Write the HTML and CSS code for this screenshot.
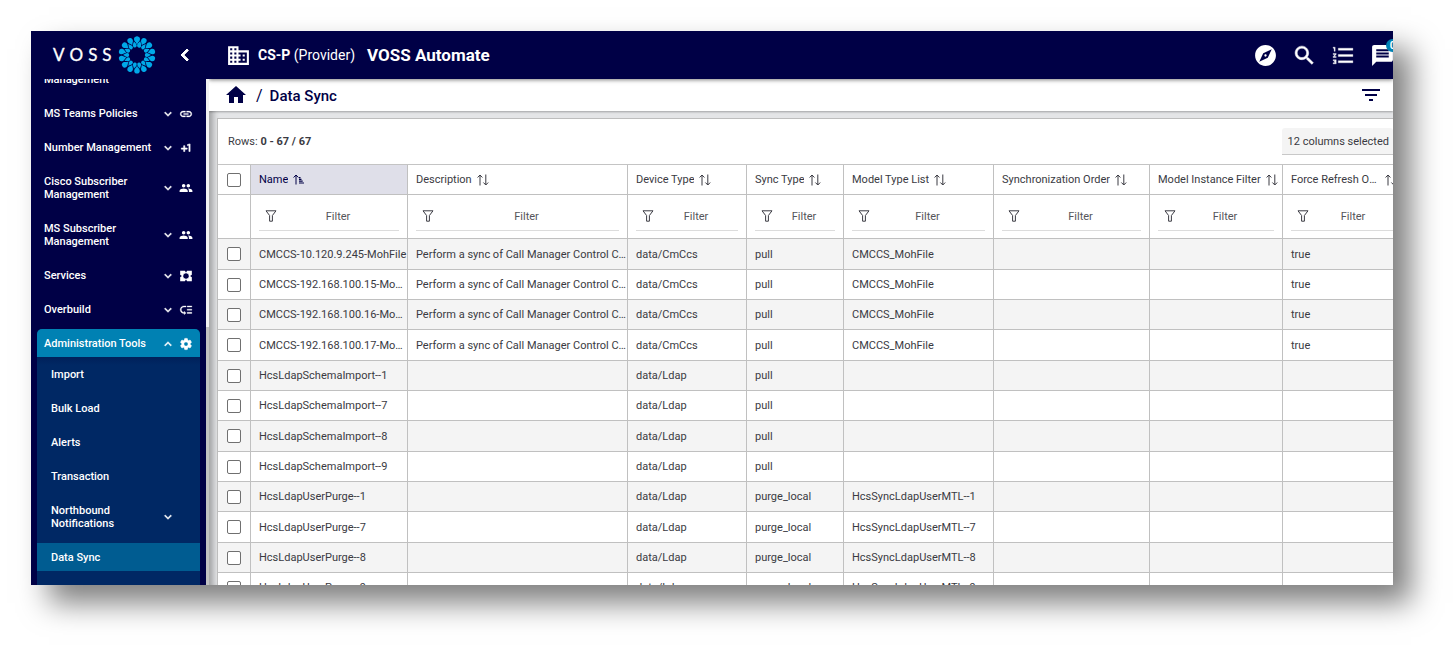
FILE: index.html
```html
<!DOCTYPE html>
<html lang="en">
<head>
<meta charset="utf-8">
<title>VOSS Automate - Data Sync</title>
<link rel="stylesheet" href="styles.css">
</head>
<body>
<svg class="sprite" aria-hidden="true">
  <symbol id="more" viewBox="0 0 24 24"><path stroke="currentColor" d="M16.6 8.6 12 13.2 7.400 8.600 6 10l6 6 6-6z"/></symbol>
  <symbol id="less" viewBox="0 0 24 24"><path stroke="currentColor" d="m12 8-6 6 1.400 1.400L12 10.800l4.600 4.600L18 14z"/></symbol>
  <symbol id="back" viewBox="0 0 24 24"><path stroke="currentColor" d="M15.4 7.4 14 6l-6 6 6 6 1.400-1.400L10.800 12z"/></symbol>
  <symbol id="link" viewBox="0 0 24 24"><path stroke="currentColor" stroke-width=".5" d="M3.900 12c0-1.710 1.390-3.100 3.100-3.100h4V7H7c-2.760 0-5 2.240-5 5s2.240 5 5 5h4v-1.900H7c-1.710 0-3.100-1.390-3.100-3.100zM8 13h8v-2H8v2zm9-6h-4v1.900h4c1.710 0 3.100 1.390 3.100 3.100s-1.390 3.100-3.100 3.100h-4V17h4c2.760 0 5-2.240 5-5s-2.240-5-5-5z"/></symbol>
  <symbol id="plus" viewBox="0 0 24 24"><path stroke="currentColor" d="M10 8H8v4H4v2h4v4h2v-4h4v-2h-4zm4.500-1.920V7.900l2.500-.5V18h2V5z"/></symbol>
  <symbol id="people" viewBox="0 0 24 24"><path d="M16 11c1.660 0 2.990-1.340 2.990-3S17.660 5 16 5c-1.660 0-3 1.340-3 3s1.340 3 3 3zm-8 0c1.660 0 2.990-1.340 2.990-3S9.660 5 8 5C6.340 5 5 6.340 5 8s1.340 3 3 3zm0 2c-2.330 0-7 1.170-7 3.500V19h14v-2.500c0-2.330-4.670-3.500-7-3.500zm8 0c-.29 0-.62.02-.97.05 1.160.84 1.970 1.970 1.970 3.450V19h6v-2.500c0-2.330-4.670-3.500-7-3.500z"/></symbol>
  <symbol id="services" viewBox="0 0 24 24"><path fill-rule="evenodd" d="M2 3h8l2 3 2-3h8v7l-3 2 3 2v7h-8l-2-3-2 3H2v-7l3-2-3-2zM8 8v2.500L6.500 12 8 13.500V16h2.500l1.500 1.500 1.500-1.500H16v-2.500l1.500-1.500-1.500-1.500V8h-2.500L12 6.500 10.500 8z"/></symbol>
  <symbol id="overbuild" viewBox="0 0 24 24"><path stroke="currentColor" stroke-width=".5" d="M14 5h8v2h-8zm0 5.500h8v2h-8zm0 5.500h8v2h-8zM2 11.500C2 15.080 4.920 18 8.500 18H9v2l3-3-3-3v2h-.5C6.020 16 4 13.980 4 11.500S6.020 7 8.500 7H12V5H8.500C4.920 5 2 7.920 2 11.500z"/></symbol>
  <symbol id="gear" viewBox="0 0 24 24"><path stroke="currentColor" d="M19.140 12.940c.04-.3.06-.61.06-.94 0-.32-.02-.64-.07-.94l2.030-1.580c.18-.14.23-.41.12-.61l-1.920-3.320c-.12-.22-.37-.29-.59-.22l-2.390.96c-.5-.38-1.030-.7-1.620-.94l-.36-2.540c-.04-.24-.24-.41-.48-.41h-3.840c-.24 0-.43.17-.47.41l-.36 2.540c-.59.24-1.130.57-1.620.94l-2.390-.96c-.22-.08-.47 0-.59.22L2.740 8.870c-.12.21-.08.47.12.61l2.030 1.580c-.05.3-.09.63-.09.94s.02.64.07.94l-2.030 1.580c-.18.14-.23.41-.12.61l1.920 3.320c.12.22.37.29.59.22l2.390-.96c.5.38 1.030.7 1.620.94l.36 2.540c.05.24.24.41.48.41h3.840c.24 0 .44-.17.47-.41l.36-2.540c.59-.24 1.130-.56 1.620-.94l2.390.96c.22.08.47 0 .59-.22l1.920-3.320c.12-.22.07-.47-.12-.61l-2.010-1.580zM12 15.600c-1.980 0-3.600-1.620-3.600-3.600s1.620-3.600 3.600-3.600 3.600 1.620 3.600 3.600-1.620 3.600-3.600 3.600z"/></symbol>
  <symbol id="building" viewBox="0 0 24 24"><path d="M12 7V3H2v18h20V7H12zM6 19H4v-2h2v2zm0-4H4v-2h2v2zm0-4H4V9h2v2zm0-4H4V5h2v2zm4 12H8v-2h2v2zm0-4H8v-2h2v2zm0-4H8V9h2v2zm0-4H8V5h2v2zm10 12h-8v-2h2v-2h-2v-2h2v-2h-2V9h8v10zm-2-8h-2v2h2v-2zm0 4h-2v2h2v-2z"/></symbol>
  <symbol id="compass" viewBox="0 0 24 24"><path d="M12 10.900c-.61 0-1.100.49-1.100 1.100s.49 1.100 1.100 1.100c.61 0 1.100-.49 1.100-1.100s-.49-1.100-1.100-1.100zM12 2C6.480 2 2 6.480 2 12s4.480 10 10 10 10-4.480 10-10S17.520 2 12 2zm2.190 12.190L6 18l3.810-8.190L18 6l-3.810 8.190z"/></symbol>
  <symbol id="search" viewBox="0 0 24 24"><path stroke="currentColor" stroke-width=".5" d="M15.500 14h-.79l-.28-.27C15.410 12.590 16 11.110 16 9.500 16 5.910 13.090 3 9.500 3S3 5.910 3 9.500 5.910 16 9.500 16c1.610 0 3.090-.59 4.230-1.570l.27.28v.79l5 4.990L20.490 19l-4.990-5zm-6 0C7.010 14 5 11.990 5 9.500S7.010 5 9.500 5 14 7.010 14 9.500 11.990 14 9.500 14z"/></symbol>
  <symbol id="list" viewBox="0 0 24 24"><path stroke="currentColor" stroke-width=".3" d="M2 17h2v.5H3v1h1v.5H2v1h3v-4H2v1zm1-9h1V4H2v1h1v3zm-1 3h1.800L2 13.100v.9h3v-1H3.200L5 10.900V10H2v1zm5-6v2h14V5H7zm0 14h14v-2H7v2zm0-6h14v-2H7v2z"/></symbol>
  <symbol id="message" viewBox="0 0 24 24"><path d="M20 2H4c-1.100 0-1.990.9-1.990 2L2 22l4-4h14c1.100 0 2-.9 2-2V4c0-1.100-.9-2-2-2zm-2 12H6v-2h12v2zm0-3H6V9h12v2zm0-3H6V6h12v2z"/></symbol>
  <symbol id="home" viewBox="0 0 24 24"><path d="M10 20v-6h4v6h5v-8h3L12 3 2 12h3v8z"/></symbol>
  <symbol id="filters" viewBox="0 0 24 24"><path d="M10 18h4v-2h-4v2zM3 6v2h18V6H3zm3 7h12v-2H6v2z"/></symbol>
  <symbol id="funnel" viewBox="0 0 12 12"><path d="M1 .8h10L7.400 5.500v5.700H4.600V5.500z" fill="none" stroke="currentColor"/></symbol>
  <symbol id="sort" viewBox="0 0 12 12"><path d="M3 11.500V1.200M.6 3.500 3 1l2.400 2.500M8.800.5v10.300M6.400 8.500l2.400 2.500 2.400-2.500" fill="none" stroke="currentColor"/></symbol>
  <symbol id="sorted" viewBox="0 0 12 12"><path d="M3 10.500V1.200M.6 3.500 3 1l2.400 2.500" fill="none" stroke="currentColor"/><path d="M6 3h1.500v1.200H6zM6 4.800h2.500V6H6zM6 6.600h3.700v1.200H6zM6 8.400h5v1.200H6z"/></symbol>
  <symbol id="petals" viewBox="-19 -19 38 38"><path id="petal" d="M0-10.800C-.9-13-2.800-13.800-2.800-15.700a2.800 2.800 0 0 1 5.600 0C2.800-13.800.9-13 0-10.800z"/><path id="seed" transform="rotate(12.860)" d="M0-14C.6-12.200 1.900-11.500 1.900-9.700a1.900 1.900 0 0 1-3.800 0C-1.900-11.500-.6-12.200 0-14z"/>
    <g id="pair"><use href="#petal"/><use href="#seed"/></g>
    <use href="#pair" transform="rotate(25.710)"/><use href="#pair" transform="rotate(51.430)"/><use href="#pair" transform="rotate(77.140)"/><use href="#pair" transform="rotate(102.860)"/><use href="#pair" transform="rotate(128.570)"/><use href="#pair" transform="rotate(154.290)"/><use href="#pair" transform="rotate(180)"/><use href="#pair" transform="rotate(205.710)"/><use href="#pair" transform="rotate(231.430)"/><use href="#pair" transform="rotate(257.140)"/><use href="#pair" transform="rotate(282.860)"/><use href="#pair" transform="rotate(308.570)"/><use href="#pair" transform="rotate(334.290)"/>
  </symbol>
</svg>
<div class="app">
  <aside class="sidebar">
    <div class="brand">
      <a class="logo" href="#" aria-label="VOSS home">
        <span class="logo-word"><span>V</span><span>O</span><span>S</span><span>S</span></span>
        <svg class="logo-mark"><use href="#petals"/></svg>
      </a>
      <button class="collapse" aria-label="Collapse menu"><svg><use href="#back"/></svg></button>
    </div>
    <div class="menu-scroll">
      <nav class="menu">
        <a class="item" href="#"><span class="label">Management</span></a>
        <a class="item" href="#"><span class="label">MS Teams Policies</span><svg><use href="#more"/></svg><svg><use href="#link"/></svg></a>
        <a class="item" href="#"><span class="label">Number Management</span><svg><use href="#more"/></svg><svg><use href="#plus"/></svg></a>
        <a class="item" href="#"><span class="label">Cisco Subscriber<br>Management</span><svg><use href="#more"/></svg><svg><use href="#people"/></svg></a>
        <a class="item" href="#"><span class="label">MS Subscriber<br>Management</span><svg><use href="#more"/></svg><svg><use href="#people"/></svg></a>
        <a class="item" href="#"><span class="label">Services</span><svg><use href="#more"/></svg><svg><use href="#services"/></svg></a>
        <a class="item" href="#"><span class="label">Overbuild</span><svg><use href="#more"/></svg><svg><use href="#overbuild"/></svg></a>
        <div class="group">
          <a class="item open" href="#"><span class="label">Administration Tools</span><svg><use href="#less"/></svg><svg><use href="#gear"/></svg></a>
          <div class="submenu">
            <a class="item" href="#"><span class="label">Import</span></a>
            <a class="item" href="#"><span class="label">Bulk Load</span></a>
            <a class="item" href="#"><span class="label">Alerts</span></a>
            <a class="item" href="#"><span class="label">Transaction</span></a>
            <a class="item" href="#"><span class="label">Northbound<br>Notifications</span><svg><use href="#more"/></svg><span class="spacer"></span></a>
            <a class="item current" href="#"><span class="label">Data Sync</span></a>
          </div>
        </div>
      </nav>
      <div class="track"><div class="thumb"></div></div>
    </div>
  </aside>
  <main class="main">
    <header class="topbar">
      <svg class="building"><use href="#building"/></svg>
      <p class="scope"><b>CS-P</b> (Provider)</p>
      <h1>VOSS Automate</h1>
      <div class="tools">
        <button aria-label="Explore"><svg><use href="#compass"/></svg></button>
        <button aria-label="Search"><svg><use href="#search"/></svg></button>
        <button aria-label="Transactions"><svg><use href="#list"/></svg></button>
        <button aria-label="Messages"><svg><use href="#message"/></svg><span class="badge">0</span></button>
      </div>
    </header>
    <div class="crumbs">
      <a href="#" aria-label="Home"><svg><use href="#home"/></svg></a>
      <span class="slash">/</span>
      <h2>Data Sync</h2>
      <button class="filter-button" aria-label="Filters"><svg><use href="#filters"/></svg></button>
    </div>
    <section class="card">
      <div class="card-head">
        <p>Rows: <b>0 - 67 / 67</b></p>
        <button class="columns">12 columns selected</button>
      </div>
      <table class="grid">
        <colgroup><col class="c-check"><col class="c-name"><col class="c-desc"><col class="c-device"><col class="c-sync"><col class="c-model"><col class="c-order"><col class="c-instance"><col class="c-force"></colgroup>
        <thead>
          <tr class="titles">
            <th><input type="checkbox" aria-label="Select all"></th>
            <th class="sorted"><div><span>Name</span><svg><use href="#sorted"/></svg></div></th>
            <th><div><span>Description</span><svg><use href="#sort"/></svg></div></th>
            <th><div><span>Device Type</span><svg><use href="#sort"/></svg></div></th>
            <th><div><span>Sync Type</span><svg><use href="#sort"/></svg></div></th>
            <th><div><span>Model Type List</span><svg><use href="#sort"/></svg></div></th>
            <th><div><span>Synchronization Order</span><svg><use href="#sort"/></svg></div></th>
            <th><div><span>Model Instance Filter</span><svg><use href="#sort"/></svg></div></th>
            <th><div><span>Force Refresh Of Data</span><svg><use href="#sort"/></svg></div></th>
          </tr>
          <tr class="filters">
            <td></td>
            <td><label><svg><use href="#funnel"/></svg><input type="text" placeholder="Filter" aria-label="Filter name"></label></td>
            <td><label><svg><use href="#funnel"/></svg><input type="text" placeholder="Filter" aria-label="Filter description"></label></td>
            <td><label><svg><use href="#funnel"/></svg><input type="text" placeholder="Filter" aria-label="Filter device type"></label></td>
            <td><label><svg><use href="#funnel"/></svg><input type="text" placeholder="Filter" aria-label="Filter sync type"></label></td>
            <td><label><svg><use href="#funnel"/></svg><input type="text" placeholder="Filter" aria-label="Filter model type list"></label></td>
            <td><label><svg><use href="#funnel"/></svg><input type="text" placeholder="Filter" aria-label="Filter synchronization order"></label></td>
            <td><label><svg><use href="#funnel"/></svg><input type="text" placeholder="Filter" aria-label="Filter model instance"></label></td>
            <td><label><svg><use href="#funnel"/></svg><input type="text" placeholder="Filter" aria-label="Filter force refresh"></label></td>
          </tr>
        </thead>
        <tbody>
          <tr><td><input type="checkbox" aria-label="Select row"></td><td>CMCCS-10.120.9.245-MohFile</td><td>Perform a sync of Call Manager Control Center</td><td>data/CmCcs</td><td>pull</td><td>CMCCS_MohFile</td><td></td><td></td><td>true</td></tr>
          <tr><td><input type="checkbox" aria-label="Select row"></td><td>CMCCS-192.168.100.15-MohFile</td><td>Perform a sync of Call Manager Control Center</td><td>data/CmCcs</td><td>pull</td><td>CMCCS_MohFile</td><td></td><td></td><td>true</td></tr>
          <tr><td><input type="checkbox" aria-label="Select row"></td><td>CMCCS-192.168.100.16-MohFile</td><td>Perform a sync of Call Manager Control Center</td><td>data/CmCcs</td><td>pull</td><td>CMCCS_MohFile</td><td></td><td></td><td>true</td></tr>
          <tr><td><input type="checkbox" aria-label="Select row"></td><td>CMCCS-192.168.100.17-MohFile</td><td>Perform a sync of Call Manager Control Center</td><td>data/CmCcs</td><td>pull</td><td>CMCCS_MohFile</td><td></td><td></td><td>true</td></tr>
          <tr><td><input type="checkbox" aria-label="Select row"></td><td>HcsLdapSchemaImport--1</td><td></td><td>data/Ldap</td><td>pull</td><td></td><td></td><td></td><td></td></tr>
          <tr><td><input type="checkbox" aria-label="Select row"></td><td>HcsLdapSchemaImport--7</td><td></td><td>data/Ldap</td><td>pull</td><td></td><td></td><td></td><td></td></tr>
          <tr><td><input type="checkbox" aria-label="Select row"></td><td>HcsLdapSchemaImport--8</td><td></td><td>data/Ldap</td><td>pull</td><td></td><td></td><td></td><td></td></tr>
          <tr><td><input type="checkbox" aria-label="Select row"></td><td>HcsLdapSchemaImport--9</td><td></td><td>data/Ldap</td><td>pull</td><td></td><td></td><td></td><td></td></tr>
          <tr><td><input type="checkbox" aria-label="Select row"></td><td>HcsLdapUserPurge--1</td><td></td><td>data/Ldap</td><td>purge_local</td><td>HcsSyncLdapUserMTL--1</td><td></td><td></td><td></td></tr>
          <tr><td><input type="checkbox" aria-label="Select row"></td><td>HcsLdapUserPurge--7</td><td></td><td>data/Ldap</td><td>purge_local</td><td>HcsSyncLdapUserMTL--7</td><td></td><td></td><td></td></tr>
          <tr><td><input type="checkbox" aria-label="Select row"></td><td>HcsLdapUserPurge--8</td><td></td><td>data/Ldap</td><td>purge_local</td><td>HcsSyncLdapUserMTL--8</td><td></td><td></td><td></td></tr>
          <tr><td><input type="checkbox" aria-label="Select row"></td><td>HcsLdapUserPurge--9</td><td></td><td>data/Ldap</td><td>purge_local</td><td>HcsSyncLdapUserMTL--9</td><td></td><td></td><td></td></tr>
        </tbody>
      </table>
    </section>
  </main>
</div>
</body>
</html>
```
FILE: styles.css
```css
* { box-sizing: border-box; }
html, body { height: 100%; }
body {
  margin: 0;
  padding: 31px 62px 62px 31px;
  overflow: hidden;
  background: #fff;
  color: #3a3a42;
  font: 11px/13px Roboto, "Liberation Sans", sans-serif;
}
h1, h2, p { margin: 0; }
a { color: inherit; text-decoration: none; }
button { padding: 0; border: 0; background: none; color: inherit; font: inherit; }
svg { display: block; flex: none; fill: currentColor; }
.sprite { position: absolute; width: 0; height: 0; }

.app {
  display: flex;
  height: 100%;
  overflow: hidden;
  background: #e4e5e7;
  box-shadow: 18px 18px 28px rgba(0, 0, 0, .5);
}

/* Sidebar */
.sidebar {
  display: flex;
  flex-direction: column;
  flex: none;
  width: 178px;
  background: #000046;
  color: #fff;
}
.brand {
  display: flex;
  flex: none;
  align-items: center;
  height: 48px;
  padding: 0 12px 0 22px;
}
.logo { display: flex; align-items: center; gap: 6px; }
.logo-word { display: flex; gap: 5px; font: 17px/20px Lato, sans-serif; -webkit-text-stroke: 0.3px currentColor; }
.logo-mark { width: 38px; height: 38px; color: #00a9e8; }
.collapse { margin-left: auto; }
.collapse svg { width: 24px; height: 24px; }
.menu-scroll { display: flex; flex: 1; min-height: 0; overflow: hidden; }
.menu {
  display: flex;
  flex: 1;
  flex-direction: column;
  gap: 6px;
  height: max-content;
  margin-top: -14px;
  padding: 0 6px;
}
.item {
  display: flex;
  align-items: center;
  gap: 4px;
  min-height: 28px;
  padding: 8px 7px 7px;
  font-weight: 500;
}
.item .label { flex: 1; }
.item svg, .spacer { width: 14px; height: 14px; margin: -1px 0; }
.group { overflow: hidden; border-radius: 5px 5px 0 0; background: #002864; }
.open { background: #0081b3; }
.submenu {
  display: flex;
  flex-direction: column;
  gap: 6px;
  padding: 3px 0 20px;
  background: linear-gradient(#00205a, #002864 8px);
}
.submenu .item { padding-left: 14px; }
.current { background: #005c91; }
.track { flex: none; width: 3px; background: #f1f1f1; }
.thumb { height: 100%; margin-top: 248px; background: #c1c1c1; }

/* Main column */
.main { display: flex; flex: 1; flex-direction: column; min-width: 0; overflow: hidden; box-shadow: inset 8px 0 6px -4px rgba(0, 0, 0, .3); }
.topbar {
  display: flex;
  position: relative;
  flex: none;
  align-items: center;
  height: 48px;
  padding-left: 17px;
  background: #000046;
  color: #fff;
  box-shadow: 0 1px 4px rgba(0, 0, 0, .5);
}
.building { width: 25px; height: 25px; }
.scope { margin-left: 7px; font-size: 14px; line-height: 20px; }
.topbar h1 { margin-left: 12px; font-size: 17px; line-height: 20px; font-weight: 700; }
.tools { display: flex; gap: 14px; margin: 0 -2px 0 auto; }
.tools button { position: relative; }
.tools svg { width: 25px; height: 25px; }
.badge {
  position: absolute;
  top: -4px;
  left: 16px;
  width: 13px;
  height: 13px;
  border-radius: 7px;
  background: #0081b3;
  font-size: 10px;
  font-weight: 700;
}
.crumbs {
  display: flex;
  flex: none;
  align-items: center;
  height: 32px;
  padding: 0 10px 0 15px;
  background: #fff;
  color: #000046;
  box-shadow: 0 1px 2px rgba(0, 0, 0, .3);
}
.crumbs svg { width: 24px; height: 24px; }
.slash { margin: 2px 7px 0 8px; font-size: 16px; line-height: 20px; }
.crumbs h2 { margin-top: 2px; font-size: 15px; line-height: 20px; font-weight: 500; }
.filter-button { margin-left: auto; }

/* Table card */
.card {
  flex: 1;
  min-height: 0;
  margin: 7px 0 0 8px;
  overflow: hidden;
  border: solid #bdbdbd;
  border-width: 1px 0 0 1px;
  background: #fff;
}
.card-head { display: flex; align-items: center; height: 45px; padding-left: 10px; }
.columns {
  height: 27px;
  margin-left: auto;
  padding: 0 4px 0 6px;
  border-bottom: 1px solid #c8c8c8;
  border-radius: 3px 3px 0 0;
  background: #f4f4f4;
}
.grid { width: 1180px; border-spacing: 0; table-layout: fixed; border-top: 1px solid #c4c4c4; }
.c-check { width: 33px; }
.c-name { width: 157px; }
.c-desc { width: 220px; }
.c-device { width: 119px; }
.c-sync { width: 97px; }
.c-model { width: 150px; }
.c-order { width: 156px; }
.c-instance { width: 133px; }
.c-force { width: 115px; }
.grid th, .grid td {
  height: 30px;
  padding: 0 0 0 8px;
  overflow: hidden;
  border: solid #c0c0c0;
  border-width: 0 1px 1px 0;
  font-weight: 400;
  text-align: left;
  text-overflow: ellipsis;
  white-space: nowrap;
}
.grid th div { display: flex; align-items: center; gap: 5px; }
.grid th span { overflow: hidden; text-overflow: ellipsis; }
.grid th svg { width: 12px; height: 12px; }
.grid .sorted { background: #dfdfe9; color: #000046; }
.grid .filters td { height: 44px; padding-right: 8px; }
.grid .filters td:last-child { padding-right: 0; }
.filters label {
  display: flex;
  align-items: center;
  height: 28px;
  padding-left: 6px;
  border-bottom: 1px solid #dcdcdc;
}
.filters svg { width: 12px; height: 12px; }
.filters input {
  flex: 1;
  min-width: 0;
  padding: 0;
  border: 0;
  outline: 0;
  background: none;
  font: inherit;
  text-align: center;
}
.filters input::placeholder { color: #55555a; }
.grid tbody tr:nth-child(odd) { background: #f4f4f4; }
.grid tbody tr:nth-child(3n+1) td { height: 31px; }
.grid th:first-child, .grid td:first-child { padding: 0; }
.grid input[type="checkbox"] {
  display: block;
  width: 14px;
  height: 14px;
  margin: 0 auto;
  appearance: none;
  border: 1px solid #707070;
  border-radius: 2px;
  background: #fff;
}
```
